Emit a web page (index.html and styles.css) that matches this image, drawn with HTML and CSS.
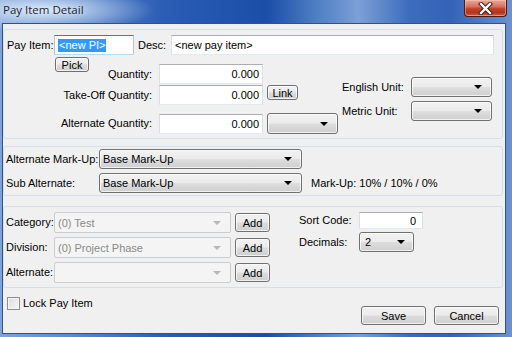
FILE: index.html
```html
<!DOCTYPE html>
<html lang="en">
<head>
    <meta charset="UTF-8">
    <title>Pay Item Detail</title>
    <link rel="stylesheet" href="styles.css">
</head>
<body>
    <div class="window">
        <div class="titlebar">
            <span class="title">Pay Item Detail</span>
            <div class="close-btn">
                <svg width="17" height="13" viewBox="0 0 17 13">
                    <path d="M4 2 L13 11 M13 2 L4 11" stroke="#3a1810" stroke-width="4.2" stroke-linecap="square"/>
                    <path d="M4 2 L13 11 M13 2 L4 11" stroke="#ffffff" stroke-width="2.4" stroke-linecap="square"/>
                </svg>
            </div>
        </div>

        <div class="client">
            <!-- Pay item and quantities -->
            <div class="panel panel-item">
                <div class="row-top">
                    <span class="lbl lbl-pi">Pay Item:</span>
                    <div class="tb tb-pi focus"><span class="sel">&lt;new PI&gt;</span></div>
                    <span class="lbl lbl-desc">Desc:</span>
                    <div class="tb tb-desc">&lt;new pay item&gt;</div>
                </div>
                <div class="row-pick">
                    <button class="btn btn-small btn-pick">Pick</button>
                </div>
                <div class="qty-area">
                    <div class="qty-col">
                        <div class="qrow">
                            <span class="lbl qlbl">Quantity:</span>
                            <div class="tb num">0.000</div>
                        </div>
                        <div class="qrow qrow-take">
                            <span class="lbl qlbl">Take-Off Quantity:</span>
                            <div class="tb num">0.000</div>
                            <button class="btn btn-small btn-link">Link</button>
                        </div>
                        <div class="qrow qrow-alt">
                            <span class="lbl qlbl">Alternate Quantity:</span>
                            <div class="tb num">0.000</div>
                            <div class="combo combo-altunit"><span class="arrow"></span></div>
                        </div>
                    </div>
                    <div class="unit-col">
                        <div class="urow">
                            <span class="lbl ulbl">English Unit:</span>
                            <div class="combo combo-unit"><span class="arrow"></span></div>
                        </div>
                        <div class="urow">
                            <span class="lbl ulbl">Metric Unit:</span>
                            <div class="combo combo-unit"><span class="arrow"></span></div>
                        </div>
                    </div>
                </div>
            </div>

            <!-- Mark-ups -->
            <div class="panel panel-markup">
                <div class="mrow">
                    <span class="lbl mlbl">Alternate Mark-Up:</span>
                    <div class="combo combo-markup"><span class="val">Base Mark-Up</span><span class="arrow"></span></div>
                </div>
                <div class="mrow">
                    <span class="lbl mlbl">Sub Alternate:</span>
                    <div class="combo combo-markup"><span class="val">Base Mark-Up</span><span class="arrow"></span></div>
                    <span class="lbl markup-info">Mark-Up: 10% / 10% / 0%</span>
                </div>
            </div>

            <!-- Classification -->
            <div class="panel panel-class">
                <div class="class-col">
                    <div class="crow">
                        <span class="lbl clbl">Category:</span>
                        <div class="combo disabled combo-class"><span class="val">(0) Test</span><span class="arrow"></span></div>
                        <button class="btn btn-add">Add</button>
                    </div>
                    <div class="crow">
                        <span class="lbl clbl">Division:</span>
                        <div class="combo disabled combo-class"><span class="val">(0) Project Phase</span><span class="arrow"></span></div>
                        <button class="btn btn-add">Add</button>
                    </div>
                    <div class="crow">
                        <span class="lbl clbl">Alternate:</span>
                        <div class="combo disabled combo-class"><span class="val"></span><span class="arrow"></span></div>
                        <button class="btn btn-add">Add</button>
                    </div>
                </div>
                <div class="sort-col">
                    <div class="srow">
                        <span class="lbl slbl">Sort Code:</span>
                        <div class="tb num tb-sort">0</div>
                    </div>
                    <div class="srow">
                        <span class="lbl slbl">Decimals:</span>
                        <div class="combo combo-dec"><span class="val">2</span><span class="arrow"></span></div>
                    </div>
                </div>
            </div>

            <div class="footer">
                <label class="check">
                    <span class="check-box"></span>
                    <span class="lbl">Lock Pay Item</span>
                </label>
                <div class="actions">
                    <button class="btn btn-action">Save</button>
                    <button class="btn btn-action">Cancel</button>
                </div>
            </div>
        </div>
    </div>
</body>
</html>
```

FILE: styles.css
```css
* {
    margin: 0;
    padding: 0;
    box-sizing: border-box;
}

body {
    font-family: "Liberation Sans", Arial, sans-serif;
    font-size: 11px;
    color: #000;
    background: #fff;
}

.window {
    width: 512px;
    height: 337px;
    display: flex;
    flex-direction: column;
    padding: 0 6px 3px 2px;
    background:
        radial-gradient(ellipse 110px 22px at 45px 10px, rgba(235, 245, 255, 0.85), rgba(235, 245, 255, 0) 100%),
        linear-gradient(90deg, #7fa3d9 0%, #5d89cd 14%, #2b5db4 32%, #1a4ea8 52%, #4f7fc4 62%, #7ba0d6 70%, #3d6cbd 80%, #3462b7 88%, #6b93cf 100%);
}

/* title bar */
.titlebar {
    height: 23px;
    display: flex;
    align-items: flex-start;
}

.title {
    font-family: "Open Sans", "Liberation Sans", sans-serif;
    font-size: 11.5px;
    color: #1b2433;
    padding: 2px 0 0 1px;
    text-shadow: 0 0 6px rgba(255, 255, 255, 0.9);
}

.close-btn {
    margin-left: auto;
    margin-right: -1px;
    width: 43px;
    height: 17px;
    border: 1px solid #4b1a10;
    border-top: none;
    border-radius: 0 0 4px 4px;
    background: linear-gradient(180deg, #e9a898 0%, #d8735f 40%, #c1412a 55%, #b5331c 80%, #d0654a 100%);
    box-shadow: inset 0 0 0 1px rgba(255, 210, 200, 0.45);
    display: flex;
    align-items: center;
    justify-content: center;
}

/* client area */
.client {
    flex: 1;
    background: #f0f0f0;
    border: 1px solid #32527f;
    display: flex;
    flex-direction: column;
}

.panel {
    border: 1px solid #d5dfe5;
    border-radius: 3px;
    margin-right: 2px;
}

.lbl {
    white-space: nowrap;
    line-height: 13px;
}

/* text boxes */
.tb {
    height: 20px;
    background: #fff;
    border: 1px solid #dbdfe6;
    border-top-color: #abadb3;
    border-bottom-color: #e3e9ef;
    padding: 0 3px;
    display: flex;
    align-items: center;
    white-space: nowrap;
}

.tb.num {
    justify-content: flex-end;
}

.tb.focus {
    border-color: #a4c9e3;
    border-top-color: #3d7bad;
    border-bottom-color: #b7d9ed;
}

.sel {
    background: #3399ff;
    color: #fff;
    padding: 0 1px;
    line-height: 13px;
}

/* buttons */
.btn {
    font-family: "Liberation Sans", Arial, sans-serif;
    font-size: 11px;
    color: #000;
    border: 1px solid #707070;
    border-radius: 3px;
    background: linear-gradient(180deg, #f2f2f2 0%, #ebebeb 48%, #dddddd 52%, #cfcfcf 100%);
    box-shadow: inset 0 0 0 1px rgba(255, 255, 255, 0.7);
    line-height: 12px;
}

.btn-small {
    height: 15px;
    padding: 0 3px;
}

/* combos */
.combo {
    height: 20px;
    border: 1px solid #707070;
    border-radius: 3px;
    background: linear-gradient(180deg, #f2f2f2 0%, #ebebeb 48%, #dddddd 52%, #cfcfcf 100%);
    box-shadow: inset 0 0 0 1px rgba(255, 255, 255, 0.7);
    display: flex;
    align-items: center;
    padding: 0 9px 0 3px;
}

.combo .val {
    flex: 1;
    white-space: nowrap;
}

.combo .arrow {
    margin-left: auto;
    width: 0;
    height: 0;
    border-left: 4px solid transparent;
    border-right: 4px solid transparent;
    border-top: 4px solid #000;
}

.combo.disabled {
    border-color: #c9cdd1;
    border-radius: 2px;
    background: #f4f4f4;
    box-shadow: none;
    color: #8a8a8a;
}

.combo.disabled .arrow {
    border-top-color: #b8b8b8;
}

/* pay item panel */
.panel-item {
    margin-top: 5px;
    padding: 5px 0 4px 3px;
}

.row-top {
    display: flex;
    align-items: center;
}

.lbl-pi {
    width: 47px;
}

.tb-pi {
    width: 80px;
}

.lbl-desc {
    width: 33px;
    margin-left: 4px;
}

.tb-desc {
    width: 323px;
}

.row-pick {
    margin-top: 2px;
    display: flex;
}

.btn-pick {
    margin-left: 48px;
    width: 34px;
}

.qty-area {
    margin-top: -8px;
    display: flex;
    align-items: flex-start;
}

.qrow {
    display: flex;
    align-items: center;
}

.qrow-take {
    margin-top: 1px;
    align-items: flex-start;
}

.qrow-take .qlbl {
    align-self: center;
}

.qrow-alt {
    margin-top: 8px;
}

.qlbl {
    width: 145px;
    text-align: right;
    margin-right: 7px;
}

.qrow .tb {
    width: 104px;
}

.btn-link {
    margin-left: 4px;
    width: 31px;
}

.combo-altunit {
    margin-left: 4px;
    width: 71px;
    height: 21px;
}

.unit-col {
    margin-left: 4px;
    margin-top: 13px;
    display: flex;
    flex-direction: column;
    gap: 4px;
}

.urow {
    display: flex;
    align-items: center;
}

.ulbl {
    width: 69px;
}

.combo-unit {
    width: 81px;
}

/* mark-up panel */
.panel-markup {
    margin-top: 7px;
    padding: 2px 0 2px 2px;
    display: flex;
    flex-direction: column;
    gap: 4px;
}

.mrow {
    display: flex;
    align-items: center;
}

.mlbl {
    width: 93px;
}

.combo-markup {
    width: 203px;
}

.markup-info {
    margin-left: 9px;
}

/* classification panel */
.panel-class {
    margin-top: 10px;
    padding: 5px 0 4px 2px;
    display: flex;
    align-items: flex-start;
}

.class-col {
    display: flex;
    flex-direction: column;
    gap: 4px;
}

.crow {
    display: flex;
    align-items: center;
}

.clbl {
    width: 48px;
}

.combo-class {
    width: 177px;
    height: 21px;
}

.btn-add {
    margin-left: 4px;
    width: 35px;
    height: 19px;
}

.sort-col {
    margin-left: 29px;
    display: flex;
    flex-direction: column;
    gap: 3px;
}

.srow {
    display: flex;
    align-items: center;
}

.slbl {
    width: 60px;
}

.tb-sort {
    width: 64px;
    height: 17px;
    padding-right: 6px;
}

.combo-dec {
    width: 55px;
    padding-left: 5px;
    padding-right: 8px;
}

/* footer */
.footer {
    flex: 1;
    display: flex;
    justify-content: space-between;
    padding: 0 6px 8px 4px;
}

.check {
    margin-top: 9px;
    display: flex;
    align-items: center;
    gap: 3px;
    align-self: flex-start;
}

.check-box {
    width: 13px;
    height: 13px;
    border: 1px solid #8e8f8f;
    background: linear-gradient(135deg, #dcdcdc 0%, #f6f6f6 100%);
    box-shadow: inset 0 0 0 1px #f4f4f4;
}

.actions {
    align-self: flex-end;
    display: flex;
    gap: 8px;
}

.btn-action {
    width: 65px;
    height: 19px;
}
```
